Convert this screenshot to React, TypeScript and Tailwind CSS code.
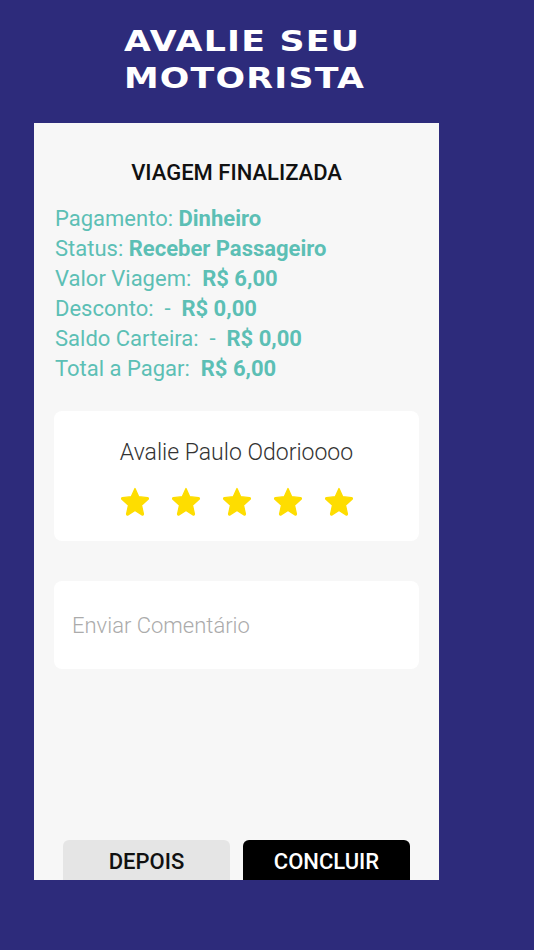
import React from "react";

function Star() {
  return (
    <svg width="34" height="33" viewBox="0 0 24 24">
      <path
        d="M12 2.6l2.7 5.9 6.4.7c.6.1.8.8.4 1.2l-4.8 4.3 1.4 6.3c.1.6-.5 1-1 .7L12 18.5l-5.1 3.2c-.5.3-1.1-.1-1-.7l1.4-6.3L2.5 10.4c-.4-.4-.2-1.1.4-1.2l6.4-.7 2.7-5.9z"
        fill="#fedd00"
        stroke="#fedd00"
        strokeWidth="1"
        strokeLinejoin="round"
      />
    </svg>
  );
}

const rows: [string, string][] = [
  ["Pagamento: ", "Dinheiro"],
  ["Status: ", "Receber Passageiro"],
  ["Valor Viagem:  ", "R$ 6,00"],
  ["Desconto:  -  ", "R$ 0,00"],
  ["Saldo Carteira:  -  ", "R$ 0,00"],
  ["Total a Pagar:  ", "R$ 6,00"],
];

export default function App() {
  return (
    <div className="w-[534px] h-[950px] bg-[#2d2b7b] flex flex-col overflow-hidden">
      {/* titulo */}
      <div className="h-[123px] pl-[124px] pt-[23px]">
        <h1 className="w-fit origin-left scale-x-[1.2] text-white text-[29px] leading-[37px] font-black tracking-[1px] uppercase [font-family:'DejaVu_Sans',sans-serif]">
          Avalie seu
          <br />
          motorista
        </h1>
      </div>

      {/* tela do app */}
      <div className="ml-[34px] w-[405px] h-[757px] bg-[#f7f7f7] overflow-hidden flex flex-col [font-family:Roboto,sans-serif]">
        <div className="pt-[37px] text-center text-[22px] leading-[26px] font-medium text-[#111]">
          VIAGEM FINALIZADA
        </div>

        <div className="pl-[21px] pt-[18px] flex flex-col">
          {rows.map(([label, value]) => (
            <div key={label} className="text-[22px] leading-[30px] text-[#5cbfb5] whitespace-pre">
              {label}
              <span className="font-bold">{value}</span>
            </div>
          ))}
        </div>

        <div className="mx-[20px] mt-[27px] h-[130px] bg-white rounded-[8px] flex flex-col items-center">
          <div className="pt-[29px] text-[23px] leading-[26px] font-light text-[#333]">
            Avalie Paulo Odorioooo
          </div>
          <div className="mt-[19px] flex gap-[17px]">
            <Star />
            <Star />
            <Star />
            <Star />
            <Star />
          </div>
        </div>

        <div className="mx-[20px] mt-[40px] h-[88px] bg-white rounded-[8px] flex items-center px-[18px]">
          <span className="text-[22px] font-light text-[#ababab]">Enviar Comentário</span>
        </div>

        <div className="mt-auto px-[29px] flex gap-[13px]">
          <button className="w-[167px] h-[40px] pt-[2px] bg-[#e5e5e5] rounded-t-[6px] text-[22px] font-medium text-[#111]">
            DEPOIS
          </button>
          <button className="w-[167px] h-[40px] pt-[2px] bg-black rounded-t-[6px] text-[22px] font-medium text-white">
            CONCLUIR
          </button>
        </div>
      </div>
    </div>
  );
}
